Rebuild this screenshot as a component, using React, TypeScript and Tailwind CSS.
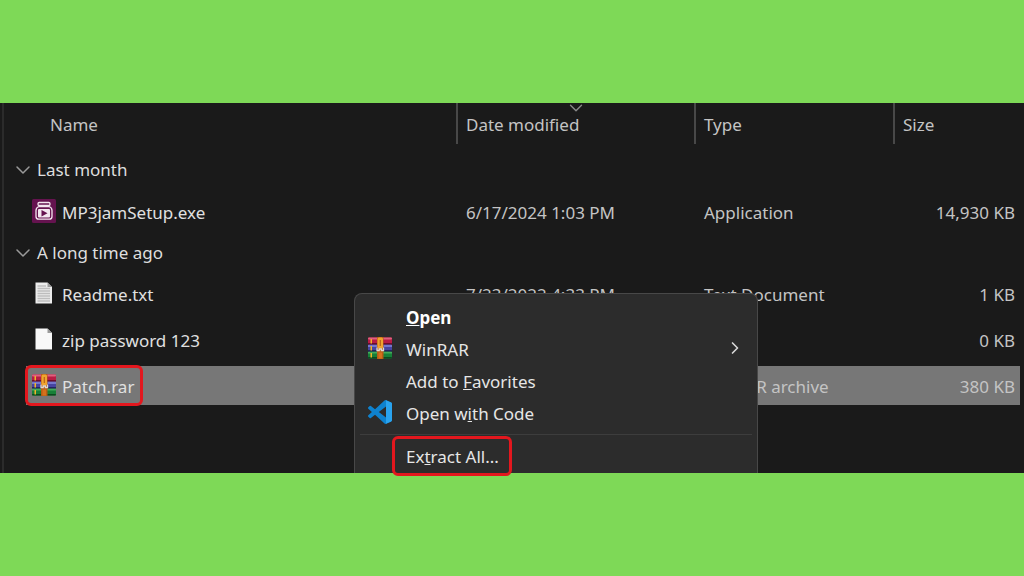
import { Fragment } from 'react';
import type { ReactNode } from 'react';
import { ChevronDown, ChevronRight } from 'lucide-react';

function WinRarIcon() {
  return (
    <svg viewBox="0 0 24 22" className="h-[22px] w-6 shrink-0" aria-hidden="true">
      <rect x="0" y="0.5" width="24" height="7" rx="1" fill="#b81c45" />
      <rect x="0" y="0.5" width="24" height="2" rx="1" fill="#e0607f" />
      <rect x="0" y="6" width="24" height="1.5" fill="#6d0d2a" />
      <rect x="0" y="7.5" width="24" height="7" rx="1" fill="#4644a0" />
      <rect x="0" y="8" width="24" height="2" fill="#7477cc" />
      <rect x="0" y="13" width="24" height="1.5" fill="#25245f" />
      <rect x="0" y="14.5" width="24" height="7" rx="1" fill="#178038" />
      <rect x="0" y="15" width="24" height="1.5" fill="#43ab58" />
      <rect x="0" y="20" width="24" height="1.5" rx="0.7" fill="#0c4a1e" />
      <path d="M2.5 2h1.500v4.500H2.500zM2.500 9h1.500v4.500H2.500zM2.500 16h1.500v4.500H2.500z" fill="#f0b429" />
      <rect x="9" y="0" width="6.500" height="22" rx="0.500" fill="#b85c14" />
      <rect x="9.500" y="0.500" width="5.500" height="11" rx="1.500" fill="#f0a52f" />
      <path d="M12.300 3v6" stroke="#b8641a" strokeWidth="1.200" />
      <path d="M9 10.500v3h2.200v-1.500h2.200v1.500H15.500v-3" fill="none" stroke="#dedad4" strokeWidth="1.300" />
      <rect x="10.500" y="15.500" width="3.500" height="6" fill="#d4701c" />
    </svg>
  );
}

function Mp3jamIcon() {
  return (
    <svg viewBox="0 0 24 24" className="size-6 shrink-0" aria-hidden="true">
      <rect width="24" height="24" rx="1.500" fill="#65134f" />
      <rect x="6" y="3.500" width="12" height="3" rx="1.200" fill="none" stroke="#f3e6ef" strokeWidth="1.300" />
      <path
        d="M7 7.500h10c2 .8 3 2 3 4v6c0 1.700-1 2.700-2.700 2.700H6.700C5 20.200 4 19.200 4 17.500v-6c0-2 1-3.200 3-4z"
        fill="none"
        stroke="#f3e6ef"
        strokeWidth="1.300"
      />
      <rect x="6" y="10" width="12" height="8.500" rx="1" fill="#f3e6ef" />
      <path d="M9.500 11v6.500l6-3.200z" fill="#65134f" />
    </svg>
  );
}

function PageIcon({ lined = false }: { lined?: boolean }) {
  return (
    <svg viewBox="0 0 24 24" className="size-6 shrink-0" aria-hidden="true">
      <path d="M3.500 1.500h12l4.500 4.500v16.500h-16.500z" fill={lined ? '#ececec' : '#f8f8f8'} />
      <path d="M15.500 1.500l4.500 4.500h-4.500z" fill="#9a9a9a" />
      {lined && (
        <path
          d="M5.500 5h8.500M5.500 7.500h12.500M5.500 10h12.500M5.500 12.500h12.500M5.500 15h12.500M5.500 17.500h12.500M5.500 20h12.500"
          stroke="#bdbdbd"
          strokeWidth="1.300"
        />
      )}
    </svg>
  );
}

function CodeIcon() {
  return (
    <svg viewBox="0 0 24 24" className="size-6 shrink-0" aria-hidden="true">
      <path
        d="M23.15 2.587 18.21.21a1.494 1.494 0 0 0-1.705.29l-9.46 8.63-4.12-3.128a1 1 0 0 0-1.276.057L.327 7.261A1 1 0 0 0 .326 8.74L3.899 12 .326 15.26a1 1 0 0 0 .001 1.479L1.65 17.94a1 1 0 0 0 1.276.057l4.12-3.128 9.46 8.63a1.492 1.492 0 0 0 1.704.29l4.942-2.377A1.5 1.5 0 0 0 24 20.06V3.939a1.5 1.5 0 0 0-.85-1.352zm-5.146 14.861L10.826 12l7.178-5.448z"
        fill="#0e82cf"
      />
      <path d="M18.004.15 23.15 2.587A1.500 1.500 0 0 1 24 3.939V20.060a1.500 1.500 0 0 1-.85 1.352L18.004 23.850z" fill="#2aa3ee" />
    </svg>
  );
}

type FileRow = {
  name: string;
  icon: ReactNode;
  date?: string;
  type?: string;
  size: string;
  selected?: boolean;
};

const groups: { label: string; rowClass: string; files: FileRow[] }[] = [
  {
    label: 'Last month',
    rowClass: 'h-[46px] pt-[6px]',
    files: [
      {
        name: 'MP3jamSetup.exe',
        icon: <Mp3jamIcon />,
        date: '6/17/2024 1:03 PM',
        type: 'Application',
        size: '14,930 KB',
      },
    ],
  },
  {
    label: 'A long time ago',
    rowClass: 'h-9 pb-[2px]',
    files: [
      {
        name: 'Readme.txt',
        icon: <PageIcon lined />,
        date: '7/23/2022 4:33 PM',
        type: 'Text Document',
        size: '1 KB',
      },
      { name: 'zip password 123', icon: <PageIcon />, size: '0 KB' },
      { name: 'Patch.rar', icon: <WinRarIcon />, type: 'WinRAR archive', size: '380 KB', selected: true },
    ],
  },
];

function FileTable() {
  return (
    <table className="w-full table-fixed border-separate border-spacing-0 text-left whitespace-nowrap">
      <colgroup>
        <col className="w-[22px]" />
        <col />
        <col className="w-[238px]" />
        <col className="w-[199px]" />
        <col className="w-[127px]" />
      </colgroup>
      <thead>
        <tr className="h-[41px] text-[#c4c4c4]">
          <th scope="col" colSpan={2} className="pt-[2px] pl-[46px] font-normal">
            Name
          </th>
          <th
            scope="col"
            aria-sort="descending"
            className="relative border-l-2 border-[#484848] pt-[2px] pl-2 font-normal"
          >
            Date modified
            <ChevronDown
              className="absolute -top-[6px] left-1/2 size-[22px] -translate-x-1/2 text-[#8a8a8a]"
              strokeWidth={1.5}
            />
          </th>
          <th scope="col" className="border-l-2 border-[#484848] pt-[2px] pl-2 font-normal">
            Type
          </th>
          <th scope="col" className="border-l-2 border-[#484848] pt-[2px] pl-2 font-normal">
            Size
          </th>
        </tr>
      </thead>
      <tbody>
        {groups.map((group) => (
          <Fragment key={group.label}>
            <tr>
              <td colSpan={5} className={`pl-[7px] ${group.rowClass}`}>
                <button type="button" aria-expanded="true" className="flex items-center gap-[2px] text-[#dedede]">
                  <ChevronDown className="size-6 text-[#9a9a9a]" strokeWidth={1.5} />
                  {group.label}
                </button>
              </td>
            </tr>
            {group.files.map((file) => {
              const cell = file.selected
                ? 'h-[46px] border-t-2 border-b-[5px] border-transparent bg-[#777] bg-clip-padding pt-[2px]'
                : 'h-[46px]';
              return (
                <tr key={file.name} className="text-[#c4c4c4]">
                  <td />
                  <td className={`relative pl-[6px] ${cell}`}>
                    <div className="flex items-center gap-[6px] text-[#e0e0e0]">
                      <span className="-mt-1 flex shrink-0">{file.icon}</span>
                      {file.name}
                    </div>
                    {file.selected && (
                      <span className="absolute -inset-y-px -left-px w-[118px] rounded-md border-[3px] border-[#e3171e]" />
                    )}
                  </td>
                  <td className={`pl-[10px] ${cell}`}>{file.date}</td>
                  <td className={`pl-[10px] ${cell}`}>{file.type}</td>
                  <td className={`pr-[5px] text-right ${cell}`}>{file.size}</td>
                </tr>
              );
            })}
          </Fragment>
        ))}
      </tbody>
    </table>
  );
}

function MenuItem({ icon, children, submenu }: { icon?: ReactNode; children: ReactNode; submenu?: boolean }) {
  return (
    <button type="button" role="menuitem" className="flex h-8 w-full items-center gap-[14px] pr-3 pl-[13px] text-left">
      <span className="-mt-1 flex w-6 shrink-0">{icon}</span>
      <span className="flex-1">{children}</span>
      {submenu && <ChevronRight className="-mt-1 size-5 text-[#d8d8d8]" strokeWidth={2} />}
    </button>
  );
}

function ContextMenu() {
  return (
    <div
      role="menu"
      className="absolute top-[190px] bottom-0 left-[354px] w-[404px] rounded-t-lg border border-b-0 border-[#484848] bg-[#2c2c2c] pt-2 text-[#e6e6e6]"
    >
      <MenuItem>
        <b className="text-white">
          <u>O</u>pen
        </b>
      </MenuItem>
      <MenuItem icon={<WinRarIcon />} submenu>
        WinRAR
      </MenuItem>
      <MenuItem>
        Add to <u>F</u>avorites
      </MenuItem>
      <MenuItem icon={<CodeIcon />}>
        Open w<u>i</u>th Code
      </MenuItem>
      <hr className="mx-[5px] mt-1 mb-[6px] border-[#3d3d3d]" />
      <div className="relative">
        <MenuItem>
          Ex<u>t</u>ract All...
        </MenuItem>
        <span className="absolute -top-[5px] left-[37px] h-10 w-[120px] rounded-md border-[3px] border-[#e3171e]" />
      </div>
    </div>
  );
}

export default function App() {
  return (
    <main className="flex min-h-screen flex-col justify-center bg-[#7ed957] font-['Noto_Sans',sans-serif] text-[17px] leading-6">
      <section className="relative flex bg-[#1a1a1a]">
        <div className="w-1 shrink-0 border-r-2 border-[#2b2b2b]" />
        <div className="flex-1 pr-1 pb-[63px]">
          <FileTable />
        </div>
        <ContextMenu />
      </section>
    </main>
  );
}
